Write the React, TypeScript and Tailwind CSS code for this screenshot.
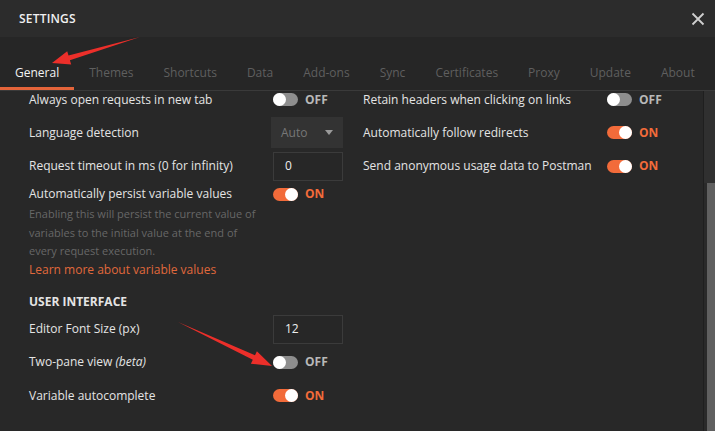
const font = { fontFamily: '"Open Sans", "Noto Sans", sans-serif' };

const Toggle = ({ on }: { on: boolean }) => (
  <div className="flex items-center gap-[7px]">
    <div
      className={
        on
          ? "flex h-[13px] w-[25px] items-center justify-end rounded-full bg-[#f26b3a]"
          : "flex h-[13px] w-[25px] items-center justify-start rounded-full bg-[#8e8e8e]"
      }
    >
      <div className="h-[13px] w-[13px] rounded-full bg-white" />
    </div>
    <span
      className={
        on
          ? "text-[12px] font-bold text-[#f26b3a]"
          : "text-[12px] font-bold text-[#b8b8b8]"
      }
    >
      {on ? "ON" : "OFF"}
    </span>
  </div>
);

const Row = ({
  label,
  h,
  children,
}: {
  label: React.ReactNode;
  h: string;
  children: React.ReactNode;
}) => (
  <div className={`flex items-center ${h}`}>
    <div className="w-[244px] text-[12px] text-[#e4e4e4]">{label}</div>
    <div>{children}</div>
  </div>
);

const NumberBox = ({ value }: { value: string }) => (
  <div className="flex h-[29px] w-[70px] items-center border border-[#3b3b3b] bg-[#272727] pl-[11px] text-[12px] text-[#eeeeee]">
    {value}
  </div>
);

const tabs = [
  "General",
  "Themes",
  "Shortcuts",
  "Data",
  "Add-ons",
  "Sync",
  "Certificates",
  "Proxy",
  "Update",
  "About",
];

export default function App() {
  return (
    <div
      className="relative flex h-[431px] w-[715px] flex-col overflow-hidden bg-[#282828]"
      style={font}
    >
      <div className="flex h-[37px] shrink-0 items-center justify-between bg-[#2c2c2c] pl-[19px] pr-[10px]">
        <span className="text-[12px] font-semibold tracking-[0.2px] text-[#f0f0f0]">
          SETTINGS
        </span>
        <svg width="14" height="14" viewBox="0 0 14 14">
          <path
            d="M1.5 1.5 L12.5 12.5 M12.5 1.5 L1.5 12.5"
            stroke="#cfcfcf"
            strokeWidth="1.8"
          />
        </svg>
      </div>

      <div className="flex h-[54px] shrink-0 items-end border-b border-[#3a3a3a] bg-[#262626]">
        <div className="flex">
          {tabs.map((t, i) => (
            <div
              key={t}
              className={
                i === 0
                  ? "h-[26px] whitespace-nowrap border-b-[3px] border-[#e4643a] px-[15px] text-[12px] leading-[18px] text-[#f2f2f2]"
                  : "h-[26px] whitespace-nowrap px-[15px] text-[12px] leading-[18px] text-[#5f5f5f]"
              }
            >
              {t}
            </div>
          ))}
        </div>
      </div>

      <div className="flex min-h-0 flex-1">
        <div className="flex-1 overflow-hidden">
          <div className="mt-[-8px] flex pl-[29px]">
            <div className="flex w-[334px] flex-col">
              <Row label="Always open requests in new tab" h="h-[33px]">
                <Toggle on={false} />
              </Row>
              <Row label="Language detection" h="h-[33px]">
                <div className="ml-[-2px] flex h-[31px] w-[72px] items-center justify-between bg-[#333333] pl-[10px] pr-[10px] text-[12px] text-[#777777]">
                  <span>Auto</span>
                  <svg width="8" height="5" viewBox="0 0 8 5">
                    <path d="M0 0 L8 0 L4 5 Z" fill="#9a9a9a" />
                  </svg>
                </div>
              </Row>
              <Row label="Request timeout in ms (0 for infinity)" h="h-[34px]">
                <NumberBox value="0" />
              </Row>
              <Row label="Automatically persist variable values" h="h-[22px]">
                <Toggle on={true} />
              </Row>
              <div className="w-[232px] text-[11px] leading-[18.5px] text-[#676767]">
                Enabling this will persist the current value of variables to the
                initial value at the end of every request execution.
              </div>
              <div className="text-[12px] leading-[18px] text-[#e0683c]">
                Learn more about variable values
              </div>
              <div className="mt-[12px] flex h-[22px] items-center text-[12px] font-bold text-[#e4e4e4]">
                USER INTERFACE
              </div>
              <Row label="Editor Font Size (px)" h="h-[33px]">
                <NumberBox value="12" />
              </Row>
              <Row
                label={
                  <>
                    Two-pane view <em>(beta)</em>
                  </>
                }
                h="h-[33px]"
              >
                <Toggle on={false} />
              </Row>
              <Row label="Variable autocomplete" h="h-[34px]">
                <Toggle on={true} />
              </Row>
            </div>
            <div className="flex w-[334px] flex-col">
              <Row label="Retain headers when clicking on links" h="h-[33px]">
                <Toggle on={false} />
              </Row>
              <Row label="Automatically follow redirects" h="h-[33px]">
                <Toggle on={true} />
              </Row>
              <Row label="Send anonymous usage data to Postman" h="h-[34px]">
                <Toggle on={true} />
              </Row>
            </div>
          </div>
        </div>
        <div className="flex w-[12px] flex-col border-l border-[#1f1f1f] bg-[#2a2a2a]">
          <div className="h-[92px] bg-[#303030]" />
          <div className="ml-[3px] flex-1 bg-[#606060]" />
        </div>
      </div>

      <svg
        className="pointer-events-none absolute left-0 top-0"
        width="715"
        height="431"
        viewBox="0 0 715 431"
      >
        <polygon
          points="140,37 69.9,60.3 71.2,64.6 52,63 67.2,51.2 68.5,55.5"
          fill="#ec2f2a"
        />
        <polygon
          points="178,322 255,355.2 256.9,351.2 272,366 250.9,363.8 252.8,359.8"
          fill="#ec2f2a"
        />
      </svg>
    </div>
  );
}
